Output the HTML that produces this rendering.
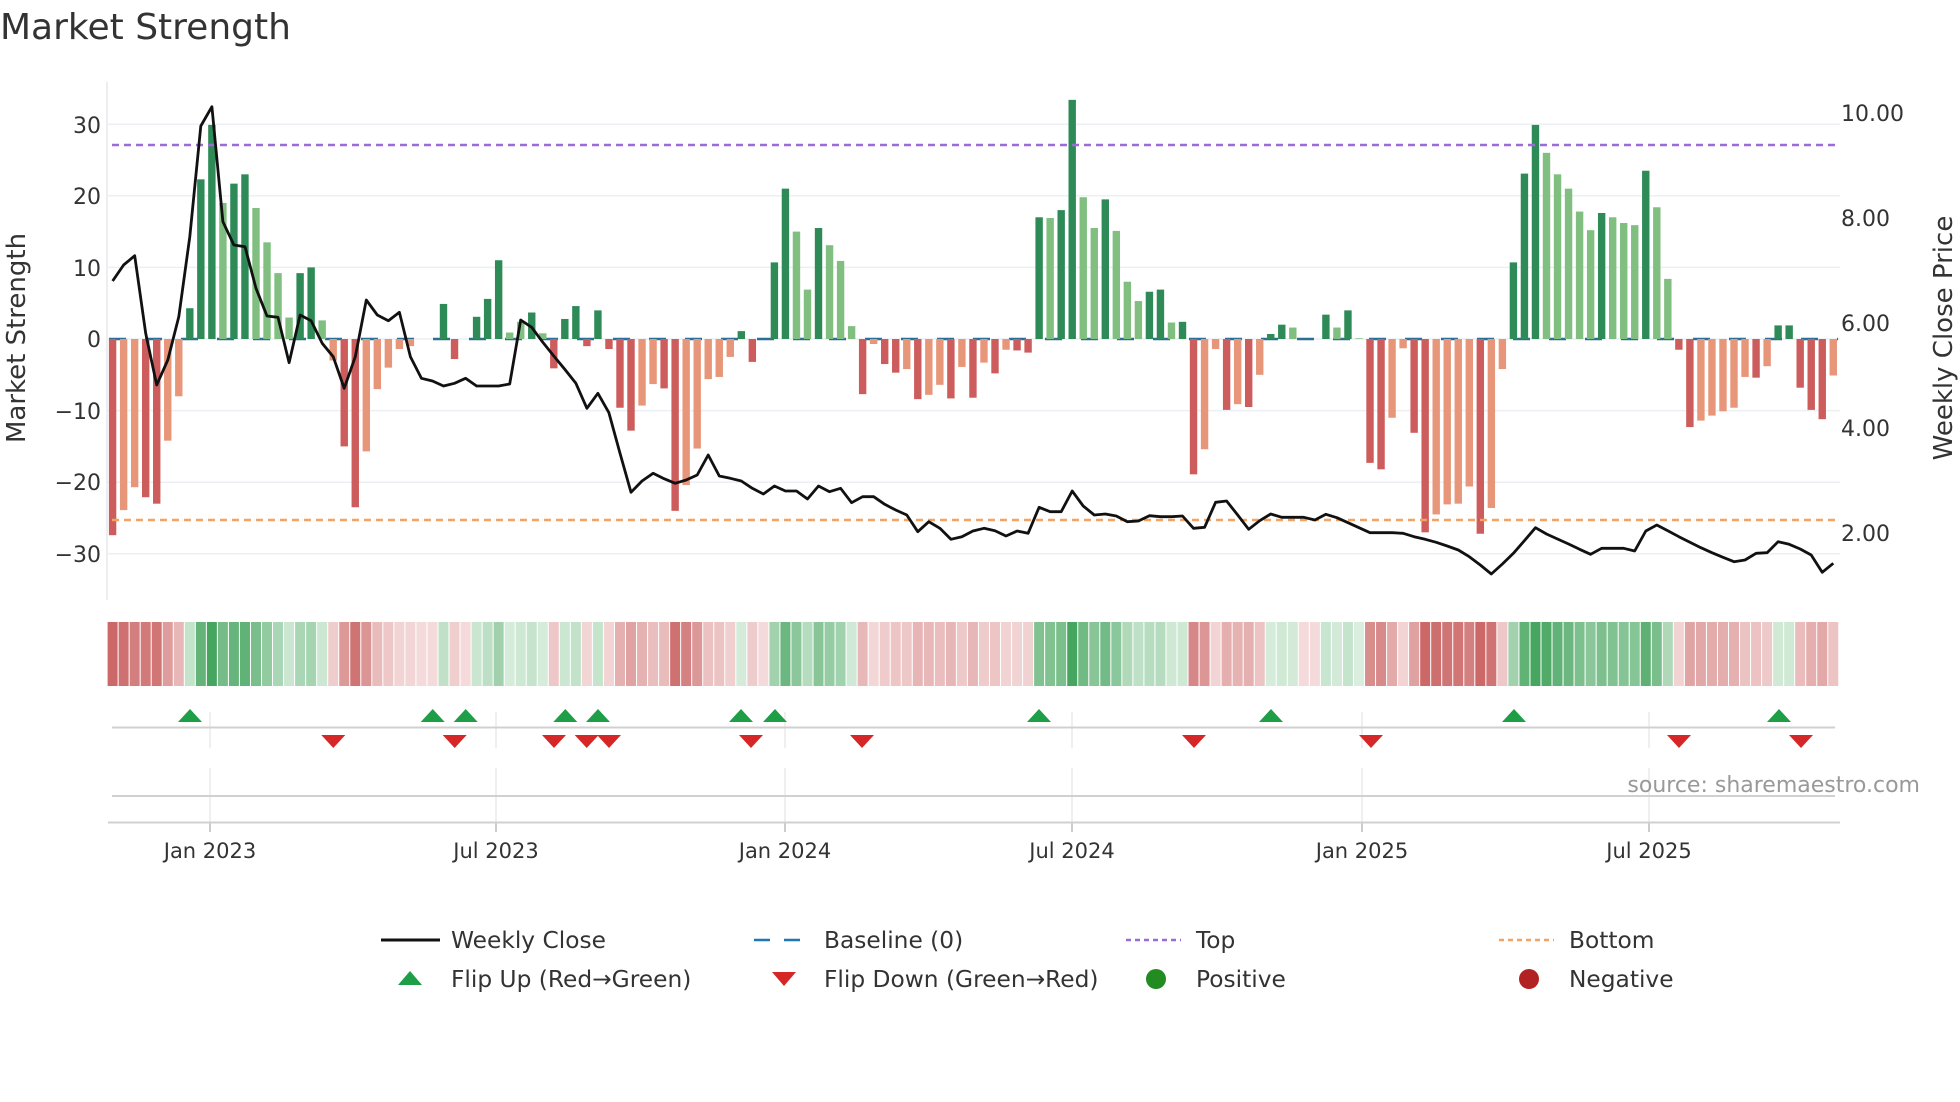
<!DOCTYPE html>
<html><head><meta charset="utf-8"><style>
html,body{margin:0;padding:0;background:#fff;}
svg{display:block;font-family:"DejaVu Sans","Liberation Sans",sans-serif;}
</style></head><body>
<svg id="s" width="1960" height="1102" viewBox="0 0 1960 1102" xmlns="http://www.w3.org/2000/svg">
<rect width="1960" height="1102" fill="#fff"/>
<text x="0" y="39" font-size="36" fill="#333">Market Strength</text>
<g id="grid"></g>
<g id="bars"></g>
<g id="heat"></g>
<g id="price"></g>
<g id="flips"></g>
<g fill="#333" font-size="22" text-anchor="end">
<text x="101" y="133">30</text><text x="101" y="204">20</text><text x="101" y="276">10</text><text x="101" y="347">0</text>
<text x="101" y="419">−10</text><text x="101" y="490">−20</text><text x="101" y="562">−30</text>
</g>
<g fill="#333" font-size="22">
<text x="1841" y="121">10.00</text><text x="1841" y="226">8.00</text><text x="1841" y="331">6.00</text>
<text x="1841" y="436">4.00</text><text x="1841" y="541">2.00</text>
</g>
<text transform="translate(25,338) rotate(-90)" text-anchor="middle" font-size="26" fill="#333">Market Strength</text>
<text transform="translate(1952,338) rotate(-90)" text-anchor="middle" font-size="26" fill="#333">Weekly Close Price</text>
<text x="1920" y="792" text-anchor="end" font-size="22" fill="#999">source: sharemaestro.com</text>
<g font-size="21" fill="#333" text-anchor="middle">
<text x="210" y="858">Jan 2023</text><text x="496" y="858">Jul 2023</text><text x="785" y="858">Jan 2024</text>
<text x="1072" y="858">Jul 2024</text><text x="1362" y="858">Jan 2025</text><text x="1649" y="858">Jul 2025</text>
</g>
<g font-size="23.3" fill="#333">
<line x1="381" y1="940" x2="440" y2="940" stroke="#111" stroke-width="3"/>
<text x="451" y="948">Weekly Close</text>
<line x1="754" y1="940" x2="809" y2="940" stroke="#1f77b4" stroke-width="2.5" stroke-dasharray="16 14"/>
<text x="824" y="948">Baseline (0)</text>
<line x1="1126" y1="940" x2="1181" y2="940" stroke="#9b6bd6" stroke-width="2.5" stroke-dasharray="5 4"/>
<text x="1196" y="948">Top</text>
<line x1="1499" y1="940" x2="1554" y2="940" stroke="#f4a261" stroke-width="2.5" stroke-dasharray="5 4"/>
<text x="1569" y="948">Bottom</text>
<polygon points="410,971 398,985 422,985" fill="#1e9e46"/>
<text x="451" y="987">Flip Up (Red→Green)</text>
<polygon points="772,972 796,972 784,986" fill="#d62728"/>
<text x="824" y="987">Flip Down (Green→Red)</text>
<circle cx="1156" cy="979" r="10" fill="#228b22"/>
<text x="1196" y="987">Positive</text>
<circle cx="1529" cy="979" r="10" fill="#b22222"/>
<text x="1569" y="987">Negative</text>
</g>
</svg>
<script>
(function(){
var NS="http://www.w3.org/2000/svg";
function el(p,t,a){var e=document.createElementNS(NS,t);for(var k in a)e.setAttribute(k,a[k]);p.appendChild(e);return e;}
var V=[-27.4,-23.9,-20.7,-22.1,-23,-14.2,-8,4.3,22.3,29.9,19,21.7,23,18.3,13.5,9.2,3,9.2,10,2.6,-3,-15,-23.5,-15.7,-7,-4,-1.4,-1,0,0,4.9,-2.8,0,3.1,5.6,11,0.9,2.4,3.7,0.8,-4.1,2.8,4.6,-1,4,-1.4,-9.6,-12.8,-9.3,-6.3,-6.9,-24,-20.4,-15.3,
-5.6,-5.3,-2.5,1.1,-3.2,0,10.7,21,15,6.9,15.5,13.1,10.9,1.8,-7.7,-0.7,-3.5,-4.7,-4.2,-8.4,-7.8,-6.4,-8.3,-3.9,-8.2,-3.3,-4.8,-1.5,-1.6,-1.9,17,16.9,18,33.4,19.8,15.5,19.5,15.1,8,5.3,6.6,6.9,2.3,2.4,-18.9,-15.4,-1.4,-9.9,-9.1,-9.5,-5,0.7,
2.0,1.6,0,0,3.4,1.6,4,0.1,-17.3,-18.2,-11,-1.3,-13.1,-27,-24.5,-23.1,-23,-20.6,-27.2,-23.6,-4.2,10.7,23.1,29.9,26,23,21,17.8,15.2,17.6,17,16.2,15.9,23.5,18.4,8.4,-1.5,-12.3,-11.4,-10.7,-10.1,-9.6,-5.3,-5.4,-3.8,1.9,1.9,-6.8,-9.9,-11.2,-5.1];
var dark=[1,0,0,1,1,0,0,1,1,1,0,1,1,0,0,0,0,1,1,0,0,1,1,0,0,0,0,0,0,0,1,1,0,1,1,1,0,0,1,0,1,1,1,1,1,1,1,1,0,0,1,1,0,0,
0,0,0,1,1,0,1,1,0,0,1,0,0,0,1,0,1,1,0,1,0,0,1,0,1,0,1,0,1,1,1,0,1,1,0,0,1,0,0,0,1,1,0,1,1,0,0,1,0,1,0,1,
1,0,0,0,1,0,1,0,1,1,0,0,1,1,0,0,0,0,1,0,0,1,1,1,0,0,0,0,0,1,0,0,0,1,0,0,1,1,0,0,0,0,0,1,0,1,1,1,1,1,0];
var P=[603,555,527,760,915,840,710,470,138,80,425,495,500,625,708,712,848,705,722,790,830,925,830,660,705,722,697,830,895,903,918,910,895,918,918,918,912,720,742,787,828,868,910,985,940,998,1120,1237,1203,1180,1196,1210,1200,1185,
1125,1188,1195,1203,1225,1242,1218,1233,1233,1257,1218,1235,1225,1268,1250,1250,1273,1290,1305,1355,1325,1345,1378,1370,1353,1345,1352,1368,1353,1360,1282,1295,1295,1233,1278,1305,1302,1308,1325,1323,1307,1310,1310,1308,1345,1342,1267,1263,1305,1348,1322,1302,
1312,1312,1312,1320,1303,1313,1328,1343,1358,1358,1358,1360,1370,1378,1387,1398,1410,1430,1455,1482,1452,1420,1382,1343,1362,1377,1392,1408,1423,1405,1405,1405,1413,1353,1335,1352,1370,1387,1403,1418,1432,1445,1440,1420,1418,1385,1393,1407,1425,1477,1450];
function X(k){return 112.6+11.03*k;}
var Y0=339,U=7.16;
var g=document.getElementById('grid');
el(g,'line',{x1:107,y1:82,x2:107,y2:600,stroke:'#e6e9ee','stroke-width':1.5});
[30,20,10,0,-10,-20,-30].forEach(function(v){el(g,'line',{x1:107,x2:1840,y1:Y0-v*U,y2:Y0-v*U,stroke:'#eceff3','stroke-width':1.5});});
var dates=[210,496,785,1072,1362,1649];
dates.forEach(function(x){el(g,'line',{x1:x,x2:x,y1:712,y2:748,stroke:'#e4e4e4','stroke-width':1.2});el(g,'line',{x1:x,x2:x,y1:768,y2:822,stroke:'#e4e4e4','stroke-width':1.2});el(g,'line',{x1:x,x2:x,y1:822,y2:832,stroke:'#bbb','stroke-width':1.5});});
el(g,'line',{x1:112,x2:1835,y1:727.5,y2:727.5,stroke:'#d0d0d0','stroke-width':2});
el(g,'line',{x1:112,x2:1835,y1:796,y2:796,stroke:'#d0d0d0','stroke-width':2});
el(g,'line',{x1:108,x2:1840,y1:822.5,y2:822.5,stroke:'#d0d0d0','stroke-width':2});
var b=document.getElementById('bars');
el(b,'line',{x1:109,x2:1838,y1:Y0,y2:Y0,stroke:'#2a6f97','stroke-width':2.5,'stroke-dasharray':'17 19'});
for(var k=0;k<V.length;k++){var v=V[k];if(Math.abs(v)<0.05)continue;var d=dark[k];
var c=v>0?(d?'#2e8b57':'#80bf80'):(d?'#cd5c5c':'#e8967a');
var h=Math.abs(v)*U;el(b,'rect',{x:X(k)-3.7,width:7.4,y:v>0?Y0-h:Y0,height:h,fill:c});}
el(b,'line',{x1:112,x2:1840,y1:145,y2:145,stroke:'#9b6bd6','stroke-width':2.5,'stroke-dasharray':'7 5'});
el(b,'line',{x1:112,x2:1840,y1:520,y2:520,stroke:'#f4a261','stroke-width':2.5,'stroke-dasharray':'7 5'});
function mix(a,c,t){var r=[];for(var i=0;i<3;i++)r.push(Math.round(a[i]+(c[i]-a[i])*t));return 'rgb('+r.join(',')+')';}
var hm=document.getElementById('heat');
for(var k=0;k<V.length;k++){var v=V[k],col;
if(v>0.05)col=mix([218,238,222],[70,165,95],Math.min(1,v/28));else col=mix([244,218,218],[204,104,104],Math.min(1,Math.max(0.05,-v)/26));
el(hm,'rect',{x:X(k)-5,width:10,y:622,height:64,fill:col});}
var pts=P.map(function(y,k){return X(k).toFixed(1)+','+(80+y/3).toFixed(1);}).join(' ');
el(document.getElementById('price'),'polyline',{points:pts,fill:'none',stroke:'#111','stroke-width':2.8,'stroke-linejoin':'round'});
var f=document.getElementById('flips');
[190,432.7,465.7,565.3,598,741,775,1039,1271,1514,1779].forEach(function(x){el(f,'polygon',{points:(x-12)+',722 '+(x+12)+',722 '+x+',709',fill:'#1e9e46'});});
[333.3,454.7,554,586.7,609,751,862,1194,1371,1679,1801].forEach(function(x){el(f,'polygon',{points:(x-12)+',735 '+(x+12)+',735 '+x+',748',fill:'#d62728'});});
})();
</script>
</body></html>
